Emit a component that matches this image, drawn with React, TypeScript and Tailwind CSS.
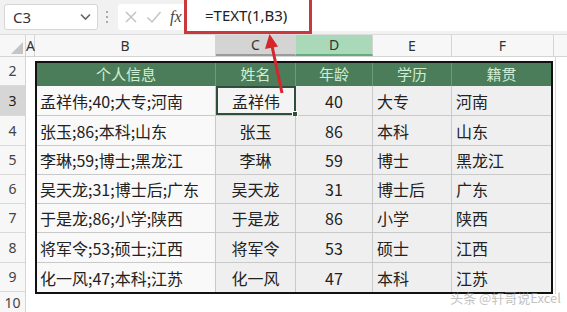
import * as React from "react";

const cjk = {fontFamily: '"Noto Sans CJK SC", "Noto Sans", sans-serif'};
const latin = {fontFamily: '"Noto Sans", sans-serif'};

type Row = {info: string; name: string; age: string; edu: string; home: string};

const rows: Row[] = [
    {info: "孟祥伟;40;大专;河南", name: "孟祥伟", age: "40", edu: "大专", home: "河南"},
    {info: "张玉;86;本科;山东", name: "张玉", age: "86", edu: "本科", home: "山东"},
    {info: "李琳;59;博士;黑龙江", name: "李琳", age: "59", edu: "博士", home: "黑龙江"},
    {info: "吴天龙;31;博士后;广东", name: "吴天龙", age: "31", edu: "博士后", home: "广东"},
    {info: "于是龙;86;小学;陕西", name: "于是龙", age: "86", edu: "小学", home: "陕西"},
    {info: "将军令;53;硕士;江西", name: "将军令", age: "53", edu: "硕士", home: "江西"},
    {info: "化一风;47;本科;江苏", name: "化一风", age: "47", edu: "本科", home: "江苏"},
];

const rowHeights = [30, 30, 29, 29, 29, 30, 29];

function FormulaBar() {
    return (
        <div className="relative flex h-[35px] shrink-0 items-center bg-[#f1f1f1] border-b border-[#dcdcdc]">
            <div className="ml-[4px] flex h-[26px] w-[94px] items-center justify-between rounded-[3px] border border-[#d6d6d6] bg-white pl-[8px] pr-[6px]">
                <span className="text-[15px] text-[#333]" style={latin}>C3</span>
                <svg width="11" height="8" viewBox="0 0 11 8"><path d="M1 1.5 L5.5 6 L10 1.5" fill="none" stroke="#666" strokeWidth="1.6"/></svg>
            </div>
            <div className="ml-[8px] flex flex-col gap-[3px]">
                <span className="block h-[2px] w-[2px] bg-[#aaa]"/>
                <span className="block h-[2px] w-[2px] bg-[#aaa]"/>
                <span className="block h-[2px] w-[2px] bg-[#aaa]"/>
            </div>
            <div className="ml-[10px] flex h-[26px] w-[66px] items-center gap-[8px] rounded-l-[3px] bg-white pl-[6px]">
                <svg width="14" height="14" viewBox="0 0 14 14"><path d="M2 2 L12 12 M12 2 L2 12" stroke="#c4c4c4" strokeWidth="1.5"/></svg>
                <svg width="16" height="14" viewBox="0 0 16 14"><path d="M1.5 7.5 L6 12 L14.5 2" fill="none" stroke="#c4c4c4" strokeWidth="1.5"/></svg>
                <span className="text-[16px] italic text-[#444]" style={{fontFamily: '"Liberation Serif", serif'}}>fx</span>
            </div>
            <div className="flex h-[31px] flex-1 items-center self-start bg-white">
                <div className="flex h-[34px] w-[128px] shrink-0 items-center self-start border-[3px] border-t-0 border-[#c8383c] pl-[18px]">
                    <span className="text-[15px] text-[#222]" style={latin}>=TEXT(1,B3)</span>
                </div>
            </div>
        </div>
    );
}

function ColumnHeaders() {
    const cols: {label: string; w: string; cls: string}[] = [
        {label: "B", w: "w-[181px]", cls: "bg-[#f7f7f7]"},
        {label: "C", w: "w-[80px]", cls: "bg-[#d4d4d4] border-b-2 border-b-[#9a9a9a]"},
        {label: "D", w: "w-[77px]", cls: "bg-[#a9d9b8] border-b-2 border-b-[#5fae7c]"},
        {label: "E", w: "w-[79px]", cls: "bg-[#f7f7f7]"},
        {label: "F", w: "w-[102px]", cls: "bg-[#f7f7f7]"},
    ];
    return (
        <div className="flex h-[22px] shrink-0 border-b border-[#d4d4d4] bg-[#f7f7f7] text-[14px] text-[#333]" style={latin}>
            <div className="relative w-[26px] shrink-0 border-r border-[#d4d4d4]">
                <svg className="absolute bottom-[2px] right-[2px]" width="12" height="12" viewBox="0 0 12 12"><path d="M12 0 L12 12 L0 12 Z" fill="#c4c4c4"/></svg>
            </div>
            <div className="flex w-[9px] shrink-0 items-center border-r border-[#d4d4d4]">A</div>
            {cols.map(c => (
                <div key={c.label} className={`flex shrink-0 items-center justify-center border-r border-[#d4d4d4] ${c.w} ${c.cls}`}>{c.label}</div>
            ))}
            <div className="flex-1"/>
        </div>
    );
}

function RowHeaders() {
    return (
        <div className="flex w-[26px] shrink-0 flex-col self-stretch border-r border-[#d4d4d4] bg-[#f7f7f7] text-[14px] leading-[18px] text-[#444]" style={latin}>
            <div className="flex h-[29px] shrink-0 items-center justify-center border-b border-[#d9d9d9]">2</div>
            {rowHeights.map((h, i) => (
                <div key={i} style={{height: h}} className={`flex shrink-0 items-center justify-center border-b border-[#d9d9d9] ${i === 0 ? "bg-[#d6d6d6] text-[#222]" : ""}`}>{i + 3}</div>
            ))}
        </div>
    );
}

function DataTable() {
    return (
        <div className="mt-[4px] ml-[9px] h-fit w-[518px] shrink-0 border-2 border-[#111]" style={cjk}>
            <div className="flex h-[23px] bg-[#4c7d5a] text-[15px] text-[#cfeed5]">
                <div className="flex w-[179px] items-center justify-center border-r border-[#6f9a7a]">个人信息</div>
                <div className="flex w-[80px] items-center justify-center border-r border-[#6f9a7a]">姓名</div>
                <div className="flex w-[77px] items-center justify-center border-r border-[#6f9a7a]">年龄</div>
                <div className="flex w-[79px] items-center justify-center border-r border-[#6f9a7a]">学历</div>
                <div className="flex flex-1 items-center justify-center">籍贯</div>
            </div>
            {rows.map((r, i) => (
                <div key={i} style={{height: rowHeights[i]}} className={`flex text-[16px] text-[#222] ${i < rows.length - 1 ? "border-b border-[#c9c9c9]" : ""}`}>
                    <div className="flex w-[179px] items-center border-r border-[#c9c9c9] bg-[#f9f9f9] pl-[3px]">{r.info}</div>
                    <div className={`relative flex w-[80px] items-center justify-center bg-[#efefef] ${i === 0 ? "border-2 border-[#2f4f3a] bg-[#f4f4f4]" : "border-r border-[#c9c9c9]"}`}>
                        {r.name}
                        {i === 0 && <span className="absolute -bottom-[4px] -right-[4px] h-[6px] w-[6px] border border-white bg-[#2f4f3a]"/>}
                    </div>
                    <div className="flex w-[77px] items-center justify-center border-r border-[#c9c9c9] bg-[#efefef]">{r.age}</div>
                    <div className="flex w-[79px] items-center border-r border-[#c9c9c9] bg-[#efefef] pl-[4px]">{r.edu}</div>
                    <div className="flex flex-1 items-center bg-[#efefef] pl-[4px]">{r.home}</div>
                </div>
            ))}
        </div>
    );
}

export default function App() {
    return (
        <div className="relative flex h-[312px] w-[567px] flex-col overflow-hidden bg-white">
            <FormulaBar/>
            <ColumnHeaders/>
            <div className="flex shrink-0">
                <RowHeaders/>
                <DataTable/>
                <div className="ml-[2px] w-[1px] shrink-0 bg-[#d9d9d9]"/>
            </div>
            <div className="flex h-[18px] shrink-0">
                <div className="flex w-[26px] shrink-0 items-center justify-center border-r border-[#d4d4d4] bg-[#f7f7f7] text-[14px] leading-[18px] text-[#444]" style={latin}>10</div>
                <div className="flex-1"/>
            </div>
            <svg className="pointer-events-none absolute left-0 top-0" width="567" height="312">
                <line x1="272" y1="46" x2="282" y2="93" stroke="#d6262b" strokeWidth="3"/>
                <path d="M269.5 34 L265 49 L278 46.5 Z" fill="#d6262b"/>
            </svg>
            <div className="absolute bottom-[5px] right-[6px] text-[13px] text-[#9a9a9a] opacity-60" style={cjk}>头条 @轩哥说Excel</div>
        </div>
    );
}
